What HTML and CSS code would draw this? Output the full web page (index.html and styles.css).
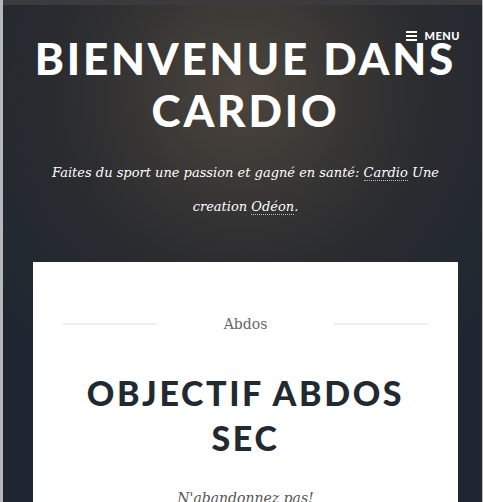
FILE: index.html
```html
<!DOCTYPE html>
<html lang="fr">
<head>
<meta charset="utf-8">
<title>Bienvenue dans Cardio</title>
<link rel="stylesheet" href="styles.css">
</head>
<body>
<div class="frame">
  <div class="topbar"></div>
  <div class="site">
    <header class="masthead">
      <nav class="menu-row">
        <button class="menu-toggle" type="button">
          <span class="burger"><span></span><span></span><span></span></span>
          <span class="menu-label">Menu</span>
        </button>
      </nav>
      <h1 class="site-title">Bienvenue dans Cardio</h1>
      <p class="site-desc">Faites du sport une passion et gagné en santé: <a href="#">Cardio</a> Une creation <a href="#">Odéon</a>.</p>
    </header>
    <main class="card">
      <div class="cat-row">
        <span class="rule"></span>
        <span class="cat">Abdos</span>
        <span class="rule"></span>
      </div>
      <h2 class="post-title">Objectif Abdos Sec</h2>
      <p class="post-sub">N'abandonnez pas!</p>
    </main>
  </div>
</div>
</body>
</html>
```

FILE: styles.css
```css
html, body {
  margin: 0;
  padding: 0;
  height: 100%;
  overflow: hidden;
}
body {
  background: #b8b8b8;
}
.frame {
  margin-left: 3px;
  margin-right: 1px;
  height: 100%;
  display: flex;
  flex-direction: column;
  background-color: #1e2731;
  background-image: radial-gradient(ellipse 330px 330px at 50% 18%, rgba(84, 74, 62, 0.85), rgba(58, 50, 46, 0.45) 55%, rgba(30, 39, 49, 0) 100%);
}
.topbar {
  height: 5px;
  background: #3b3b3d;
  flex: none;
}
.site {
  flex: 1;
}
.masthead {
  padding: 0 24px 0 30px;
  text-align: center;
}
.menu-row {
  display: flex;
  justify-content: flex-end;
  padding-top: 24px;
  margin-right: -2px;
  height: 14px;
}
.menu-toggle {
  display: flex;
  align-items: center;
  gap: 8px;
  background: none;
  border: 0;
  padding: 0;
  color: #fff;
  font-family: Lato, sans-serif;
  font-weight: 900;
  font-size: 11px;
  letter-spacing: 0.5px;
  text-transform: uppercase;
  line-height: 12px;
}
.burger {
  display: flex;
  flex-direction: column;
  gap: 2px;
  width: 11px;
}
.burger span {
  display: block;
  height: 2px;
  background: #fff;
}
.site-title {
  margin: -11px 0 0;
  font-family: Lato, sans-serif;
  font-weight: 900;
  font-size: 44px;
  line-height: 52px;
  letter-spacing: 2.8px;
  text-transform: uppercase;
  color: #fff;
}
.site-desc {
  margin: 20px 0 0;
  font-family: "DejaVu Serif", serif;
  font-style: italic;
  font-size: 13px;
  line-height: 34px;
  color: #fff;
}
.site-desc a {
  color: #fff;
  text-decoration: none;
  border-bottom: 1px dotted #bbb;
}
.card {
  margin: 38px 24px 0 30px;
  background: #fff;
  padding: 54px 30px 0;
  text-align: center;
  height: 400px;
}
.cat-row {
  display: flex;
  align-items: center;
  gap: 20px;
}
.rule {
  flex: 1;
  height: 2px;
  background: #eeeeee;
}
.cat {
  flex: none;
  width: 137px;
  font-family: "DejaVu Serif", serif;
  font-size: 14px;
  color: #666;
}
.post-title {
  margin: 38px 0 0;
  font-family: Lato, sans-serif;
  font-weight: 900;
  font-size: 34px;
  line-height: 45px;
  letter-spacing: 2.6px;
  text-transform: uppercase;
  color: #222a31;
}
.post-sub {
  margin: 30px 0 0;
  font-family: "DejaVu Serif", serif;
  font-style: italic;
  font-size: 14px;
  color: #555;
}
```
